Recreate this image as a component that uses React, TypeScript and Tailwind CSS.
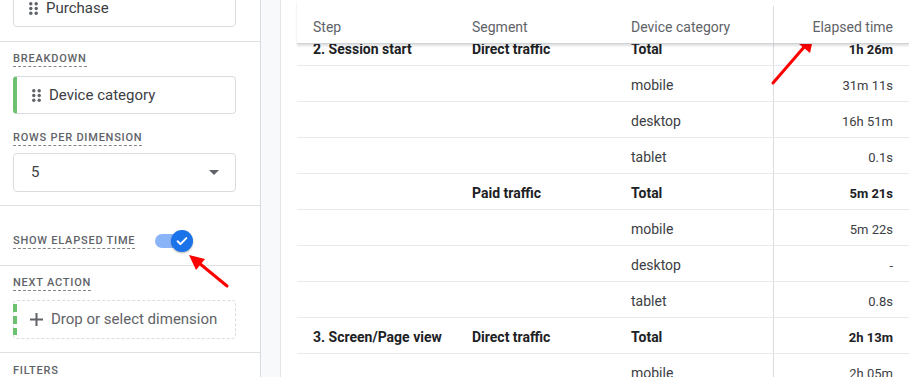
import { Fragment } from 'react'

const ROWS = [
  { step: '2. Session start', segment: 'Direct traffic', device: 'Total', time: '1h 26m', total: true },
  { step: '', segment: '', device: 'mobile', time: '31m 11s' },
  { step: '', segment: '', device: 'desktop', time: '16h 51m' },
  { step: '', segment: '', device: 'tablet', time: '0.1s' },
  { step: '', segment: 'Paid traffic', device: 'Total', time: '5m 21s', total: true },
  { step: '', segment: '', device: 'mobile', time: '5m 22s' },
  { step: '', segment: '', device: 'desktop', time: '-' },
  { step: '', segment: '', device: 'tablet', time: '0.8s' },
  { step: '3. Screen/Page view', segment: 'Direct traffic', device: 'Total', time: '2h 13m', total: true },
  { step: '', segment: '', device: 'mobile', time: '2h 05m' },
]

function DragDots() {
  return (
    <svg width="9" height="13" viewBox="0 0 9 13" className="shrink-0">
      {[1.8, 6.5, 11.2].map((y) =>
        [1.8, 7.2].map((x) => <circle key={`${x}-${y}`} cx={x} cy={y} r="1.7" fill="#5f6368" />)
      )}
    </svg>
  )
}

function Label({ children }: { children: string }) {
  return (
    <span className="block w-fit text-[11px] leading-[14px] font-medium uppercase tracking-[0.07em] text-[#5f6368] border-b border-dashed border-[#80868b]">
      {children}
    </span>
  )
}

function Sidebar() {
  return (
    <aside className="w-[261px] shrink-0 bg-white border-r border-[#dadce0] overflow-hidden">
      {/* Scrolled-off metric card */}
      <div className="pl-[13px] pr-[24px] pb-[14px] border-b border-[#e0e0e0]">
        <div className="-mt-[11px] h-[38px] flex items-center gap-[8px] pl-[15px] border border-[#dadce0] rounded">
          <DragDots />
          <span className="text-[15px] text-[#3c4043]">Purchase</span>
        </div>
      </div>

      {/* Breakdown */}
      <div className="pl-[13px] pr-[24px] pt-[10px] pb-[13px] border-b border-[#e0e0e0]">
        <Label>Breakdown</Label>
        <div className="mt-[9px] h-[38px] flex items-center gap-[8px] pl-[15px] border border-[#dadce0] border-l-4 border-l-[#6cc070] rounded">
          <DragDots />
          <span className="text-[15px] text-[#3c4043]">Device category</span>
        </div>
        <div className="mt-[17px]">
          <Label>Rows per dimension</Label>
        </div>
        <div className="mt-[7px] h-[39px] flex items-center justify-between pl-[17px] pr-[16px] border border-[#dadce0] rounded">
          <span className="text-[15px] text-[#3c4043]">5</span>
          <svg width="10" height="5" viewBox="0 0 10 5">
            <path d="M0 0h10L5 5z" fill="#5f6368" />
          </svg>
        </div>
      </div>

      {/* Show elapsed time */}
      <div className="pl-[13px] pr-[24px] pt-[24px] pb-[13px] border-b border-[#e0e0e0]">
        <div className="h-[22px] flex items-center gap-[20px]">
          <Label>Show elapsed time</Label>
          <div className="relative w-[38px] h-[22px]">
            <div className="absolute left-0 top-[4px] w-[30px] h-[14px] rounded-full bg-[#8ab4f8]" />
            <div className="absolute left-[16px] top-0 w-[22px] h-[22px] rounded-full bg-[#1a73e8] shadow-[0_1px_2px_rgba(0,0,0,0.3)] flex items-center justify-center">
              <svg width="14" height="14" viewBox="0 0 24 24">
                <path d="M4.5 12.5l4.8 4.8L19.5 7" fill="none" stroke="#fff" strokeWidth="3.4" strokeLinecap="round" strokeLinejoin="round" />
              </svg>
            </div>
          </div>
        </div>
      </div>

      {/* Next action */}
      <div className="pl-[13px] pr-[24px] pt-[10px] pb-[13px] border-b border-[#e0e0e0]">
        <Label>Next action</Label>
        <div className="relative mt-[9px] h-[39px] flex items-center gap-[7px] pl-[15px] border border-dashed border-[#dadce0] rounded">
          <div className="absolute -left-px top-[3px] bottom-[3px] w-[4px] bg-[repeating-linear-gradient(to_bottom,#6cc070_0,#6cc070_8px,transparent_8px,transparent_12px)]" />
          <svg width="15" height="15" viewBox="0 0 15 15" className="shrink-0">
            <path d="M7.5 1v13M1 7.5h13" stroke="#5f6368" strokeWidth="2" />
          </svg>
          <span className="text-[15px] text-[#5f6368]">Drop or select dimension</span>
        </div>
      </div>

      {/* Filters */}
      <div className="pl-[13px] pt-[11px]">
        <span className="block text-[11px] leading-[14px] font-medium uppercase tracking-[0.07em] text-[#5f6368]">Filters</span>
      </div>
    </aside>
  )
}

function Table() {
  const cols = 'grid grid-cols-[159px_159px_158px_1fr]'
  return (
    <main className="flex-1 bg-white overflow-hidden">
      <div className="ml-[16px] h-full flex flex-col">
        <div className={`${cols} relative z-10 bg-white pt-[6px] border-b border-[#cfd2d6] shadow-[0_2px_2px_rgba(0,0,0,0.12)] text-[14px] text-[#5f6368]`}>
          <div className="pl-[16px] pt-[11px] h-[37px]">Step</div>
          <div className="pl-[16px] pt-[11px]">Segment</div>
          <div className="pl-[16px] pt-[11px]">Device category</div>
          <div className="pr-[16px] pt-[11px] text-right border-l border-[#dadce0]">Elapsed time</div>
        </div>
        <div className={`${cols} -mt-[14px] text-[14px] text-[#202124]`}>
          {ROWS.map((r, i) => (
            <Fragment key={i}>
              <div className="h-[36px] pl-[16px] pt-[4px] flex items-center font-bold border-b border-[#e8eaed]">{r.step}</div>
              <div className="pl-[16px] pt-[4px] flex items-center font-bold border-b border-[#e8eaed]">{r.segment}</div>
              <div className={`pl-[16px] pt-[4px] flex items-center border-b border-[#e8eaed] ${r.total ? 'font-bold' : 'text-[#3c4043]'}`}>{r.device}</div>
              <div className={`pr-[16px] pt-[4px] flex items-center justify-end border-l border-b border-[#e8eaed] border-l-[#dadce0] ${r.total ? 'font-bold text-[13px]' : 'text-[13px] text-[#3c4043]'}`}>
                {r.time}
              </div>
            </Fragment>
          ))}
        </div>
      </div>
    </main>
  )
}

export default function App() {
  return (
    <div className="relative w-[909px] h-[377px] overflow-hidden flex bg-white" style={{ fontFamily: 'Roboto, "Liberation Sans", sans-serif' }}>
      <Sidebar />
      <div className="w-[20px] shrink-0 bg-[#f8f9fa] border-r border-[#e3e5e8]" />
      <Table />

      {/* Red annotation arrows */}
      <svg className="absolute inset-0 pointer-events-none" width="909" height="377">
        <path d="M773 83L805 46" stroke="#f00" strokeWidth="3" strokeLinecap="round" />
        <path d="M814 35L799 44L810 53z" fill="#f00" />
        <path d="M227 286L199 263" stroke="#f00" strokeWidth="3" strokeLinecap="round" />
        <path d="M189 255L196 270L205 259z" fill="#f00" />
      </svg>
    </div>
  )
}
